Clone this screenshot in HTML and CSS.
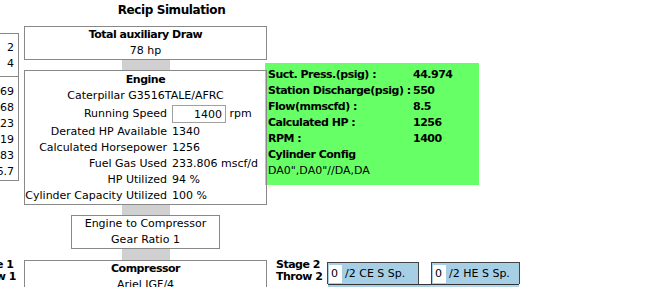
FILE: index.html
```html
<!DOCTYPE html>
<html>
<head>
<meta charset="utf-8">
<title>Recip Simulation</title>
<link rel="stylesheet" href="styles.css">
</head>
<body>
<div class="page">
  <h1 class="title">Recip Simulation</h1>
  <div class="main">
    <div class="side">
      <div class="side-block first">
        <div class="side-row">2</div>
        <div class="side-row">4</div>
      </div>
      <div class="side-block second">
        <div class="side-row">3.369</div>
        <div class="side-row">1.068</div>
        <div class="side-row">0.923</div>
        <div class="side-row">0.919</div>
        <div class="side-row">0.983</div>
        <div class="side-row">26.7</div>
      </div>
    </div>

    <div class="stack">
      <div class="box aux">
        <div class="box-title">Total auxiliary Draw</div>
        <div>78 hp</div>
      </div>
      <div class="conn"></div>
      <div class="box engine">
        <div class="box-title">Engine</div>
        <div>Caterpillar G3516TALE/AFRC</div>
        <div class="props">
          <div class="lbl speed">Running Speed</div>
          <div class="val speed"><input class="num-in" type="text" value="1400"> rpm</div>
          <div class="lbl">Derated HP Available</div>
          <div class="val">1340</div>
          <div class="lbl">Calculated Horsepower</div>
          <div class="val">1256</div>
          <div class="lbl">Fuel Gas Used</div>
          <div class="val">233.806 mscf/d</div>
          <div class="lbl">HP Utilized</div>
          <div class="val">94 %</div>
          <div class="lbl">Cylinder Capacity Utilized</div>
          <div class="val">100 %</div>
        </div>
      </div>
      <div class="conn"></div>
      <div class="box gear">
        <div>Engine to Compressor</div>
        <div>Gear Ratio 1</div>
      </div>
      <div class="conn last"></div>
    </div>

    <div class="stage-label left-label"><div>Stage 1<br>Throw 1</div></div>

    <div class="box compressor">
      <div class="box-title">Compressor</div>
      <div>Ariel JGF/4</div>
      <div>&nbsp;</div>
    </div>

    <div class="stage">
      <div class="stage-label">Stage 2<br>Throw 2</div>
      <div class="throws">
        <div class="spaces">
          <div class="space ce"><input class="sp-in" type="text" value="0">/2 CE S Sp.</div>
          <div class="space he"><input class="sp-in" type="text" value="0">/2 HE S Sp.</div>
        </div>
        <div class="cyl">
          <div class="cyl-a"></div>
          <div class="cyl-b"></div>
        </div>
      </div>
    </div>

    <div class="summary">
      <div class="sum-grid">
        <div class="sl">Suct. Press.(psig) :</div><div class="sv">44.974</div>
        <div class="sl">Station Discharge(psig) :</div><div class="sv">550</div>
        <div class="sl">Flow(mmscfd) :</div><div class="sv">8.5</div>
        <div class="sl">Calculated HP :</div><div class="sv">1256</div>
        <div class="sl">RPM :</div><div class="sv">1400</div>
      </div>
      <div class="sl">Cylinder Config</div>
      <div class="config">DA0",DA0"//DA,DA</div>
    </div>
  </div>
</div>
</body>
</html>
```

FILE: styles.css
```css
* { box-sizing: border-box; }

html, body {
  margin: 0;
  padding: 0;
  background: #fff;
}

body {
  font-family: "DejaVu Sans", Verdana, sans-serif;
  font-size: 11px;
  line-height: 16px;
  color: #000;
  overflow: hidden;
}

.page {
  width: 645px;
  height: 287px;
  overflow: hidden;
}

.title {
  margin: 0 0 6px 0;
  width: 343px;
  text-align: center;
  font-size: 12px;
  line-height: 20px;
  font-weight: bold;
  letter-spacing: -0.4px;
  color: #000;
}

.main {
  position: relative;
  display: grid;
  grid-template-columns: 19px 243px 1fr;
  column-gap: 5px;
  align-items: start;
}

/* left truncated table */
.side {
  grid-column: 1;
  grid-row: 1;
  margin-top: 7px;
  border: 1px solid #888;
  border-left: none;
}

.side-block.first {
  padding: 6px 0 4px;
  border-bottom: 1px solid #888;
}

.side-block.second {
  padding: 7px 0 0;
}

.side-row {
  display: flex;
  justify-content: flex-end;
  padding-right: 4px;
  white-space: nowrap;
}

/* central stack */
.stack {
  grid-column: 2;
  grid-row: 1;
  display: flex;
  flex-direction: column;
  align-items: center;
}

.box {
  border: 1px solid #888;
  background: transparent;
  text-align: center;
  width: 243px;
}

.box-title {
  font-weight: bold;
  letter-spacing: -0.5px;
}

.aux {
  height: 34px;
}

.conn {
  width: 48px;
  height: 10px;
  background: #d0d0d0;
}

.conn.last {
  height: 11px;
}

.engine {
  position: relative;
  z-index: 1;
  padding-top: 1px;
  height: 135px;
}

.props {
  display: grid;
  grid-template-columns: 147px 1fr;
  text-align: left;
}

.lbl {
  display: flex;
  justify-content: flex-end;
  padding-right: 5px;
  white-space: nowrap;
}

.val {
  white-space: nowrap;
}

.lbl.speed, .val.speed {
  height: 20px;
  line-height: 20px;
}

.num-in {
  width: 54px;
  height: 18px;
  margin: 1px 0 0 0;
  padding: 0 3px;
  border: 1px solid #a0a0a0;
  font-family: "DejaVu Sans", Verdana, sans-serif;
  font-size: 11px;
  text-align: right;
  vertical-align: top;
  color: #000;
  background: #fff;
}

.gear {
  width: 149px;
  height: 34px;
}

.compressor {
  grid-column: 2;
  grid-row: 2;
}

/* stage labels */
.stage-label {
  font-weight: bold;
  letter-spacing: -0.5px;
  line-height: 12px;
  white-space: nowrap;
}

.left-label {
  grid-column: 1;
  grid-row: 2;
  display: flex;
  justify-content: flex-end;
  margin-top: -1px;
  padding-right: 3px;
}

.stage {
  grid-column: 3;
  grid-row: 2;
  display: flex;
  align-items: flex-start;
  padding-left: 4px;
}

.stage .stage-label {
  margin-top: -1px;
  width: 51px;
}

.throws {
  margin-top: 2px;
  width: 193px;
}

.spaces {
  display: flex;
  gap: 12px;
}

.space {
  display: flex;
  align-items: center;
  height: 22px;
  padding: 0 1px;
  background: #a6cfe6;
  border: 1px solid #444;
  border-bottom: none;
  white-space: nowrap;
}

.space.ce { width: 92px; }
.space.he { width: 89px; }

.sp-in {
  width: 13px;
  height: 18px;
  margin: 0 3px 0 0;
  padding: 0 2px;
  border: none;
  background: #fff;
  font-family: "DejaVu Sans", Verdana, sans-serif;
  font-size: 11px;
  color: #000;
}

.cyl {
  display: flex;
  margin-left: 1px;
  width: 191px;
  height: 20px;
  border-top: 1px solid #333;
}

.cyl-a {
  width: 102px;
  background: #a6cfe6;
}

.cyl-b {
  flex: 1;
  background: #b2d6ea;
}

/* green summary panel overlaying the layout */
.summary {
  position: absolute;
  left: 265px;
  top: 37px;
  width: 214px;
  height: 122px;
  padding: 4px 0 0 3px;
  background: #66ff66;
}

.sum-grid {
  display: grid;
  grid-template-columns: 145px 1fr;
}

.sl, .sv {
  font-weight: bold;
  letter-spacing: -0.5px;
  white-space: nowrap;
}

.config {
  white-space: nowrap;
}
```
